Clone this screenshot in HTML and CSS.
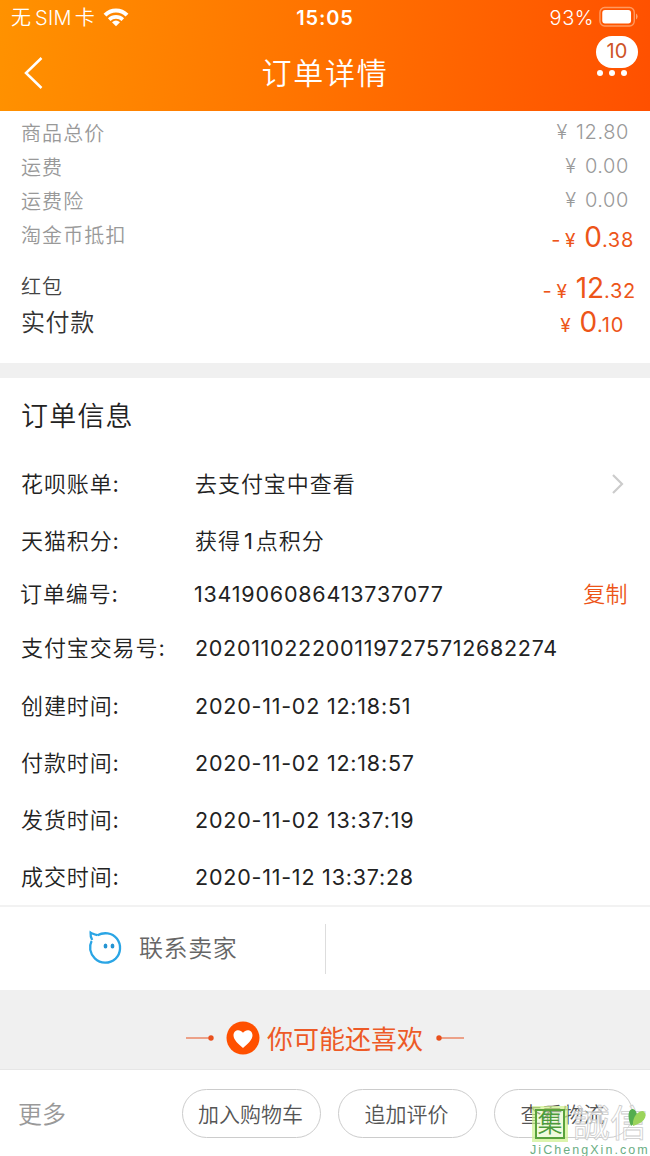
FILE: index.html
```html
<!DOCTYPE html>
<html lang="zh-CN">
<head>
<meta charset="utf-8">
<title>订单详情</title>
<link rel="stylesheet" href="styles.css">
</head>
<body>
<div class="phone">
  <header class="header">
    <div class="status">
      <div class="carrier"><span class="carrier-name">无<span class="sim">SIM</span>卡</span>
        <svg class="wifi" width="26" height="20" viewBox="0 0 26 20"><g fill="none" stroke="#fff" stroke-width="4"><path d="M2 8.2C8.200 1.800 17.800 1.800 24 8.200"/><path d="M6.200 12.600C10 8.900 16 8.900 19.800 12.600" stroke-width="3.600"/></g><path d="M9 15.200Q13 12 17 15.200L13 19.300Z" fill="#fff"/></svg>
      </div>
      <div class="clock">15:05</div>
      <div class="power"><span>93%</span>
        <svg width="39" height="22" viewBox="0 0 42 22" preserveAspectRatio="none"><rect x="1" y="1.500" width="37" height="18.500" rx="5" fill="none" stroke="#ff9a60" stroke-width="1.500"/><rect x="3.500" y="4" width="31" height="13.500" rx="3" fill="#fff"/><path d="M40 7.500v6q1.500-1 1.500-3t-1.500-3" fill="#ffb182"/></svg>
      </div>
    </div>
    <div class="nav">
      <svg class="back" width="20" height="34" viewBox="0 0 20 34"><path d="M17.500 2L2 17l15.500 15" fill="none" stroke="#fff" stroke-width="2.500"/></svg>
      <h1 class="title">订单详情</h1>
      <div class="menu"><i></i><i></i><i></i><span class="count">10</span></div>
    </div>
  </header>

  <section class="summary">
    <div class="line"><span>商品总价</span><span class="amount">¥ 12.80</span></div>
    <div class="line"><span>运费</span><span class="amount">¥ 0.00</span></div>
    <div class="line"><span>运费险</span><span class="amount">¥ 0.00</span></div>
    <div class="line"><span>淘金币抵扣</span><span class="price coin"><span class="minus">-</span><span class="yen">¥</span><b>0</b>.38</span></div>
    <div class="line packet-line"><span>红包</span><span class="price packet"><span class="minus">-</span><span class="yen">¥</span><b>12</b>.32</span></div>
    <div class="line total-line"><span>实付款</span><span class="price total"><span class="yen">¥</span><b>0</b>.10</span></div>
  </section>

  <section class="info">
    <h2 class="info-title">订单信息</h2>
    <div class="row"><span class="label">花呗账单<b>:</b></span><span class="cn">去支付宝中查看</span>
      <svg class="chevron" width="14" height="22" viewBox="0 0 14 22"><path d="M2 2l9 9-9 9" fill="none" stroke="#ccc" stroke-width="2.200"/></svg></div>
    <div class="row"><span class="label">天猫积分<b>:</b></span><span class="cn">获得<span class="one">1</span>点积分</span></div>
    <div class="row number-row"><span class="label">订单编号<b>:</b></span><span class="num order-no">1341906086413737077</span><span class="copy">复制</span></div>
    <div class="row trade-row"><span class="label">支付宝交易号<b>:</b></span><span class="num trade-no">2020110222001197275712682274</span></div>
    <div class="row"><span class="label">创建时间<b>:</b></span><span class="num">2020-11-02 12:18:51</span></div>
    <div class="row"><span class="label">付款时间<b>:</b></span><span class="num">2020-11-02 12:18:57</span></div>
    <div class="row"><span class="label">发货时间<b>:</b></span><span class="num">2020-11-02 13:37:19</span></div>
    <div class="row"><span class="label">成交时间<b>:</b></span><span class="num">2020-11-12 13:37:28</span></div>
  </section>

  <section class="contact">
    <div class="seller">
      <svg width="34" height="36" viewBox="0 0 34 36"><path d="M9.500 5.200C5 3.800 3.200 3 2.600 2.600C2.400 4.600 2.700 7.200 4.200 10M9.500 5.200C16 1.800 24 2.800 28.800 8.500C33.600 14.500 33 23.400 27.600 28.600C21.500 34.200 12.500 34 6.800 28.400C1.800 23.400 0.800 16.500 3.600 11" fill="none" stroke="#2aa5e5" stroke-width="2.300"/><ellipse cx="17.500" cy="16" rx="1.900" ry="2.500" fill="#2494d2"/><ellipse cx="24.500" cy="16" rx="1.900" ry="2.500" fill="#2494d2"/></svg>
      <span class="seller-text">联系卖家</span>
    </div>
  </section>

  <section class="like">
    <svg width="28" height="8" viewBox="0 0 28 8"><path d="M0 4h24" stroke="#ea7650" stroke-width="1.300"/><circle cx="25" cy="4" r="2.700" fill="#e9501d"/></svg>
    <svg class="heart" width="34" height="34" viewBox="0 0 34 34"><circle cx="17" cy="17" r="16.500" fill="#ff5000"/><path d="M17 27C12.500 23 7.500 19 7.500 14.200C7.500 8.800 14 7.300 17 11.800C20 7.300 26.500 8.800 26.500 14.200C26.500 19 21.500 23 17 27Z" fill="#fff"/></svg>
    <span class="like-text">你可能还喜欢</span>
    <svg width="28" height="8" viewBox="0 0 28 8"><path d="M4 4h24" stroke="#ea7650" stroke-width="1.300"/><circle cx="3" cy="4" r="2.700" fill="#e9501d"/></svg>
  </section>

  <footer class="actions">
    <span class="more">更多</span>
    <div class="buttons">
      <span class="button">加入购物车</span>
      <span class="button">追加评价</span>
      <span class="button">查看物流</span>
    </div>
  </footer>

  <div class="watermark">
    <div class="mark-top"><span class="seal">集</span><span class="mark-name">誠信</span>
      <svg class="leaf" width="19" height="22" viewBox="0 0 19 22"><path d="M3 18C-1 9 0 1 5 1C9 2 10 8 8 14Z" fill="#54ad4e"/><path d="M5 18C4 10 9 3 15 3C20 6 17 12 12 15Q8 17 5 18Z" fill="#9bd45b"/></svg>
    </div>
    <div class="mark-url">JiChengXin.com</div>
  </div>
</div>
</body>
</html>
```

FILE: styles.css
```css
* { box-sizing: border-box; }
body {
  margin: 0;
  background: #fff;
  font-family: Inter, "Noto Sans CJK SC", sans-serif;
  font-weight: 400;
}
svg { display: block; flex: none; }
.phone { position: relative; width: 650px; height: 1156px; overflow: hidden; white-space: nowrap; }

.header { height: 111px; background: linear-gradient(98deg, #ff9200 0%, #ff7300 48%, #ff5000 100%); color: #fff; }
.status { height: 36px; display: grid; grid-template-columns: 1fr 60px 1fr; align-items: center; padding: 0 12px 0 11px; font-size: 20px; }
.carrier { display: flex; align-items: center; gap: 8px; font-weight: 350; }
.carrier-name { font-size: 20px; line-height: 30px; }
.wifi { margin-top: -2px; }
.sim { margin: 0 3px 0 4px; letter-spacing: .3px; }
.clock { text-align: center; font-weight: 600; letter-spacing: .9px; padding-left: 1px; }
.power { display: flex; justify-content: flex-end; align-items: center; gap: 5px; font-weight: 350; letter-spacing: .5px; }
.power svg { margin-top: -2px; }
.nav { height: 75px; display: grid; grid-template-columns: 120px 1fr 120px; align-items: center; padding: 0 23px; }
.back { margin: -2px 0 0 1px; }
.title { margin: 0; padding-bottom: 1px; text-align: center; font-size: 30px; line-height: 44px; font-weight: 350; letter-spacing: 1.700px; }
.menu { position: relative; display: flex; justify-content: flex-end; gap: 6px; margin-top: -1px; }
.menu i { width: 6px; height: 6px; border-radius: 50%; background: #fff; }
.count { position: absolute; right: -11px; bottom: 8px; width: 42px; height: 32px; border-radius: 16px; background: #fff; color: #ce5427; font-size: 20px; line-height: 31px; text-align: center; }

.summary { height: 252px; padding: 6px 21px 0; }
.line { height: 34px; display: flex; justify-content: space-between; align-items: center; color: #999; font-size: 20px; letter-spacing: 1.100px; line-height: 30px; font-weight: 350; }
.amount { letter-spacing: .6px; word-spacing: 2px; padding-bottom: 4px; }
.price { color: #ed5519; font-size: 20px; font-weight: 400; letter-spacing: .7px; padding-top: 5px; }
.price b { font-size: 28px; font-weight: 400; letter-spacing: 0; }
.minus { margin-right: 4px; }
.yen { font-size: 19px; margin-right: 8px; }
.coin { margin-right: -5px; }
.packet { margin-right: -7px; }
.total { margin-right: 5px; padding-top: 1px; }
.packet-line { height: 36px; margin-top: 16px; color: #444; }
.total-line { height: 36px; color: #333; font-size: 24px; letter-spacing: .6px; }

.info { height: 542px; padding: 15px 21px 0; background: linear-gradient(#f0f0f0 15px, #fff 15px); color: #222; }
.info-title { margin: 0; height: 77px; line-height: 78px; font-size: 27px; font-weight: 350; letter-spacing: 1.200px; }
.row { height: 57px; display: flex; align-items: center; font-size: 22px; line-height: 32px; font-weight: 350; }
.label { width: 174px; letter-spacing: .9px; }
.label b { font-weight: 400; }
.cn { letter-spacing: .95px; }
.one { margin: 0 2px 0 3px; font-weight: 400; }
.num { font-size: 21.500px; font-weight: 400; letter-spacing: .78px; }
.trade-no { letter-spacing: .7px; }
.number-row { height: 51px; margin-left: -1px; }
.number-row, .trade-row { padding-bottom: 1px; }
.chevron { margin-left: auto; margin-right: 4px; }
.copy { margin-left: auto; margin-right: 1px; color: #ed5519; letter-spacing: .4px; }

.contact { height: 85px; border-top: 2px solid #f2f2f2; display: flex; align-items: center; }
.seller { width: 326px; height: 50px; padding: 0 0 2px 88px; display: flex; align-items: center; gap: 17px; border-right: 1px solid #ddd; color: #666; font-size: 24px; font-weight: 350; letter-spacing: .6px; line-height: 34px; }
.seller-text { padding-top: 2px; }

.like { height: 80px; padding-top: 16px; background: #f0f0f0; border-bottom: 1px solid #e6e6e6; display: flex; justify-content: center; align-items: center; color: #ed5a27; }
.heart { margin: 0 7px 0 12px; }
.like-text { font-size: 26px; line-height: 38px; margin-right: 13px; padding-top: 4px; }

.actions { height: 86px; padding: 0 17px 0 18px; display: flex; align-items: center; justify-content: space-between; color: #999; font-size: 24px; font-weight: 350; }
.more { padding-bottom: 2px; }
.buttons { display: flex; gap: 17px; }
.button { width: 139px; height: 49px; border: 1px solid #ccc; border-radius: 25px; text-align: center; color: #555; font-size: 21px; line-height: 49px; padding-right: 2px; }

.watermark { position: absolute; left: 530px; top: 1106px; width: 120px; height: 50px; }
.mark-top { display: flex; align-items: center; height: 36px; }
.seal { width: 30px; height: 30px; margin: 0 8px 0 5px; border: 2px solid #58a23c; box-shadow: 0 0 0 3px rgba(205, 240, 140, .7); background: rgba(226, 247, 190, .5); color: #4d9b3b; font-size: 25px; font-weight: 350; line-height: 25px; text-align: center; }
.mark-name { font-size: 37px; line-height: 36px; color: rgba(255, 255, 255, .6); -webkit-text-stroke: .8px #ccc; }
.leaf { position: absolute; left: 98px; top: 2px; }
.mark-url { color: #6bae84; font-family: "Liberation Sans", sans-serif; font-size: 12.500px; line-height: 16px; letter-spacing: 2.050px; }
```
